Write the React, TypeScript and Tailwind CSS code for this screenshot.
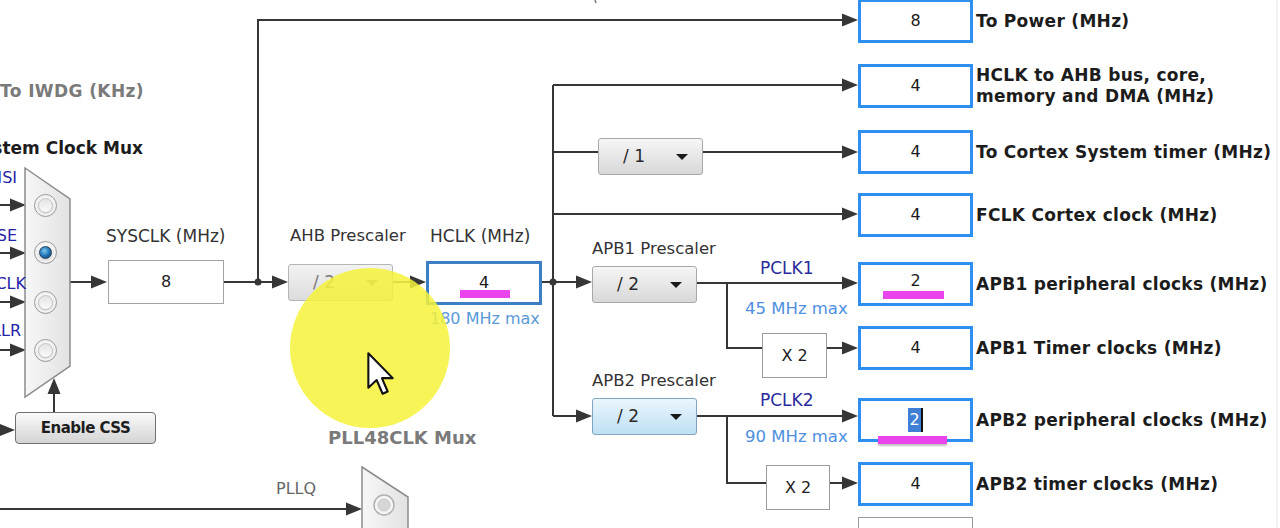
const INK = "#363636";

function ArrowR({ x1, x2, y, w = 2 }: { x1: number; x2: number; y: number; w?: number }) {
  return (
    <g>
      <line x1={x1} y1={y} x2={x2 - 10} y2={y} stroke={INK} strokeWidth={w} />
      <polygon points={`${x2 - 16},${y - 6.5} ${x2},${y} ${x2 - 16},${y + 6.5}`} fill={INK} />
    </g>
  );
}

function Wire({ d, w = 2 }: { d: string; w?: number }) {
  return <path d={d} stroke={INK} strokeWidth={w} fill="none" />;
}

function Radio({ top, on = false }: { top: number; on?: boolean }) {
  return (
    <div
      className="absolute left-[34px] flex h-[23px] w-[23px] items-center justify-center rounded-full border border-[#9a9a9a] bg-gradient-to-b from-[#fdfdfd] to-[#d9d9d9] shadow-[inset_0_0_0_2px_#f2f2f2]"
      style={{ top }}
    >
      {on ? (
        <span className="h-[13px] w-[13px] rounded-full border border-[#22415e] bg-[radial-gradient(circle_at_40%_35%,#7cc6f2,#1b6fb0_55%,#0e3a63)]" />
      ) : (
        <span className="h-[15px] w-[15px] rounded-full border border-[#c4c4c4] bg-gradient-to-b from-[#e4e4e4] to-[#fafafa]" />
      )}
    </div>
  );
}

function Select({
  label,
  className,
  tone = "normal",
}: {
  label: string;
  className: string;
  tone?: "normal" | "hover" | "disabled";
}) {
  const skin =
    tone === "hover"
      ? "border-[#7ea6c2] from-[#eaf6fd] to-[#bfe0f3]"
      : tone === "disabled"
        ? "border-[#b5b5b5] from-[#f3f3f3] to-[#dcdcdc]"
        : "border-[#a8a8a8] from-[#f6f6f6] to-[#d8d8d8]";
  const text = tone === "disabled" ? "text-[#7a7a7a]" : "text-[#2a2a2a]";
  return (
    <div
      className={`absolute flex h-[37px] w-[105px] items-center rounded-[3px] border bg-gradient-to-b pl-[24px] pr-[14px] ${skin} ${className}`}
    >
      <span className={`text-[17px] ${text}`}>{label}</span>
      <span
        className={`ml-auto h-0 w-0 border-x-[6px] border-t-[6px] border-x-transparent ${
          tone === "disabled" ? "border-t-[#8a8a8a]" : "border-t-[#1a1a1a]"
        }`}
      />
    </div>
  );
}

function OutBox({ top, value, children }: { top: number; value: React.ReactNode; children: React.ReactNode }) {
  return (
    <div className="absolute left-[858px] flex h-[44px] items-center" style={{ top }}>
      <div className="flex h-[44px] w-[115px] items-center justify-center border-[3px] border-[#2f8ff0] bg-white text-[16px] text-[#1a1a1a]">
        {value}
      </div>
      <div className="ml-[3px] whitespace-nowrap text-[17px] font-bold leading-[21px] tracking-[0.3px] text-[#1c1c1c]">
        {children}
      </div>
    </div>
  );
}

export default function App() {
  return (
    <div className="relative h-[528px] w-[1280px] overflow-hidden bg-white font-['DejaVu_Sans',sans-serif]">
      <svg className="absolute inset-0" width={1280} height={528}>
        {/* mux inputs */}
        <ArrowR x1={0} x2={26} y={205} />
        <ArrowR x1={0} x2={26} y={253} />
        <ArrowR x1={0} x2={26} y={302} />
        <ArrowR x1={0} x2={26} y={350} />
        <ArrowR x1={0} x2={15} y={430} />
        <line x1={54} y1={412} x2={54} y2={392} stroke={INK} strokeWidth={2} />
        <polygon points="47.5,394 54,378 60.5,394" fill={INK} />

        {/* sysclk */}
        <ArrowR x1={70} x2={107} y={282} />
        <ArrowR x1={223} x2={288} y={282} />
        <circle cx={258} cy={282} r={3.5} fill={INK} />
        <Wire d="M258 282 V20 H848" />
        <ArrowR x1={840} x2={858} y={20} />

        {/* ahb */}
        <ArrowR x1={393} x2={426} y={282} w={1.5} />
        <ArrowR x1={541} x2={592} y={282} />
        <circle cx={553} cy={282} r={3.5} fill={INK} />
        <Wire d="M553 85 V416" />
        <ArrowR x1={553} x2={858} y={85} />
        <Wire d="M553 152 H598" />
        <ArrowR x1={703} x2={858} y={152} />
        <ArrowR x1={553} x2={858} y={214} />

        {/* apb1 */}
        <ArrowR x1={697} x2={858} y={283} />
        <Wire d="M727 283 V348 H762" />
        <ArrowR x1={826} x2={858} y={348} />

        {/* apb2 */}
        <ArrowR x1={553} x2={592} y={416} />
        <ArrowR x1={697} x2={858} y={416} />
        <Wire d="M727 416 V483 H766" />
        <ArrowR x1={830} x2={858} y={483} />

        {/* pllq */}
        <ArrowR x1={0} x2={362} y={509} />

        <defs>
          <linearGradient id="mux" x1="0" x2="1" y1="0" y2="0">
            <stop offset="0" stopColor="#f7f7f7" />
            <stop offset="1" stopColor="#e2e2e2" />
          </linearGradient>
        </defs>
        <polygon points="25,168 70,199 70,366 25,397" fill="url(#mux)" stroke="#8c8c8c" strokeWidth={1.5} />
        <polygon points="362,467 408,497 408,540 362,540" fill="url(#mux)" stroke="#8c8c8c" strokeWidth={1.5} />
        <circle cx={384} cy={505} r={10} fill="#f4f4f4" stroke="#b0b0b0" strokeWidth={1.5} />
        <circle cx={384} cy={505} r={6} fill="#d6d6d6" stroke="#c6c6c6" />

        <line x1={1277} y1={0} x2={1277} y2={528} stroke="#e4e4e4" />
        <line x1={595} y1={0} x2={596} y2={3} stroke="#777" strokeWidth={1.5} />
      </svg>

      {/* left side */}
      <div className="absolute left-0 top-[79px] text-[17px] font-bold tracking-[0.4px] text-[#7a7a7a]">To IWDG (KHz)</div>
      <div className="absolute right-[1137px] top-[136px] whitespace-nowrap text-[17px] font-bold text-[#1c1c1c]">
        System Clock Mux
      </div>
      <div className="absolute right-[1263px] top-[166px] text-[16px] text-[#2323a8]">HSI</div>
      <div className="absolute right-[1263px] top-[224px] text-[16px] text-[#2323a8]">HSE</div>
      <div className="absolute right-[1254px] top-[272px] text-[16px] text-[#2323a8]">PLLCLK</div>
      <div className="absolute right-[1259px] top-[319px] text-[16px] text-[#2323a8]">PLLR</div>
      <Radio top={194} />
      <Radio top={241} on />
      <Radio top={291} />
      <Radio top={339} />

      <div className="absolute left-[15px] top-[412px] flex h-[32px] w-[141px] items-center justify-center rounded-[4px] border border-[#6f6f6f] bg-gradient-to-b from-[#fafafa] to-[#d4d4d4] text-[15px] font-semibold tracking-[-0.5px] text-[#1e1e1e]">
        Enable CSS
      </div>

      <div className="absolute left-[106px] top-[224px] text-[17px] text-[#333]">SYSCLK (MHz)</div>
      <div className="absolute left-[108px] top-[260px] flex h-[44px] w-[116px] items-center justify-center border border-[#a3a3a3] bg-white text-[16px] text-[#222]">
        8
      </div>

      {/* AHB */}
      <div className="absolute left-[290px] top-[224px] text-[16.5px] text-[#333]">AHB Prescaler</div>
      <Select label="/ 2" tone="disabled" className="left-[288px] top-[264px]" />
      <div className="absolute left-[430px] top-[224px] text-[17px] text-[#333]">HCLK (MHz)</div>
      <div className="absolute left-[426px] top-[261px] flex h-[44px] w-[116px] items-start justify-center border-[3px] border-[#3d7fc4] bg-white pt-[7px] text-[16px] text-[#1a1a1a]">
        4
      </div>
      <div className="absolute left-[460px] top-[290px] h-[8px] w-[50px] bg-[#ea45ec]" />
      <div className="absolute left-[430px] top-[307px] text-[16px] text-[#5a9ad8]">180 MHz max</div>

      <Select label="/ 1" className="left-[598px] top-[138px]" />

      {/* APB1 */}
      <div className="absolute left-[592px] top-[237px] text-[16.5px] text-[#333]">APB1 Prescaler</div>
      <Select label="/ 2" className="left-[592px] top-[266px]" />
      <div className="absolute left-[760px] top-[256px] text-[17px] text-[#2a2a9c]">PCLK1</div>
      <div className="absolute left-[745px] top-[297px] text-[16.5px] text-[#4d8fe0]">45 MHz max</div>
      <div className="absolute left-[762px] top-[333px] flex h-[45px] w-[65px] items-center justify-center border border-[#9a9a9a] bg-white text-[16px] text-[#222]">
        X 2
      </div>

      {/* APB2 */}
      <div className="absolute left-[592px] top-[369px] text-[16.5px] text-[#333]">APB2 Prescaler</div>
      <Select label="/ 2" tone="hover" className="left-[592px] top-[398px]" />
      <div className="absolute left-[760px] top-[388px] text-[17px] text-[#2a2a9c]">PCLK2</div>
      <div className="absolute left-[745px] top-[425px] text-[16.5px] text-[#4d8fe0]">90 MHz max</div>
      <div className="absolute left-[766px] top-[465px] flex h-[45px] w-[64px] items-center justify-center border border-[#9a9a9a] bg-white text-[16px] text-[#222]">
        X 2
      </div>

      {/* PLL48 */}
      <div className="absolute left-[328px] top-[424px] text-[18px] font-bold text-[#7a7a7a]">PLL48CLK Mux</div>
      <div className="absolute left-[276px] top-[477px] text-[16px] text-[#666]">PLLQ</div>

      {/* outputs */}
      <OutBox top={-1} value="8">To Power (MHz)</OutBox>
      <OutBox top={64} value="4">
        HCLK to AHB bus, core,
        <br />
        memory and DMA (MHz)
      </OutBox>
      <OutBox top={130} value="4">To Cortex System timer (MHz)</OutBox>
      <OutBox top={193} value="4">FCLK Cortex clock (MHz)</OutBox>
      <OutBox top={262} value={<span className="-mt-[6px]">2</span>}>APB1 peripheral clocks (MHz)</OutBox>
      <OutBox top={326} value="4">APB1 Timer clocks (MHz)</OutBox>
      <OutBox
        top={398}
        value={
          <span className="flex items-center">
            <span className="bg-[#3f7fd6] px-[1px] leading-[24px] text-white">2</span>
            <span className="h-[24px] w-[2px] bg-[#111]" />
          </span>
        }
      >
        APB2 peripheral clocks (MHz)
      </OutBox>
      <OutBox top={462} value="4">APB2 timer clocks (MHz)</OutBox>
      <div className="absolute left-[858px] top-[517px] h-[20px] w-[115px] border border-[#9a9a9a] bg-white" />

      <div className="absolute left-[883px] top-[291px] h-[8px] w-[61px] bg-[#ea45ec]" />
      <div className="absolute left-[878px] top-[436px] h-[8px] w-[69px] bg-[#ea45ec] shadow-[0_2px_2px_rgba(0,0,0,0.25)]" />

      {/* highlight + cursor */}
      <div className="absolute left-[290px] top-[268px] h-[160px] w-[160px] rounded-full bg-[#f6f23a]/85" />
      <svg className="absolute left-[366px] top-[351px]" width={30} height={46} viewBox="0 0 13 20">
        <path
          d="M1 1 L1 16 L4.6 12.6 L7.2 18.6 L9.4 17.6 L6.9 11.8 L11.6 11.8 Z"
          fill="#fff"
          stroke="#111"
          strokeWidth={0.9}
          strokeLinejoin="round"
        />
      </svg>
    </div>
  );
}
